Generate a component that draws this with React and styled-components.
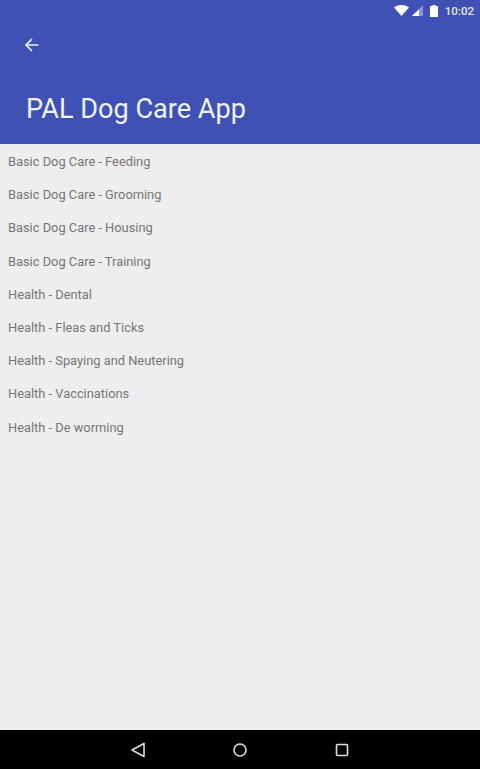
import React from "react";
import styled, { createGlobalStyle } from "styled-components";

const Global = createGlobalStyle`
  html, body { margin: 0; padding: 0; background: #eeeeee; }
  #root { height: 769px; }
`;

const Screen = styled.div`
  width: 480px;
  height: 769px;
  display: flex;
  flex-direction: column;
  overflow: hidden;
  background: #eeeeee;
  font-family: Roboto, "Liberation Sans", sans-serif;
`;

const AppBar = styled.header`
  height: 144px;
  flex: none;
  display: flex;
  flex-direction: column;
  background: #3f51b5;
  color: #fff;
`;

const StatusBar = styled.div`
  height: 21px;
  padding-right: 6px;
  display: flex;
  align-items: center;
  justify-content: flex-end;
  gap: 3px;
`;

const Clock = styled.span`
  margin-left: 4px;
  font-size: 11.5px;
  font-weight: 500;
  color: #e8eaf6;
`;

const BackButton = styled.div`
  height: 48px;
  padding-left: 24px;
  display: flex;
  align-items: center;
`;

const Title = styled.h1`
  margin: 20px 0 0 26px;
  font-size: 27.1px;
  line-height: 40px;
  font-weight: 400;
  color: #f1f3fb;
`;

const List = styled.ul`
  flex: 1;
  margin: 0;
  padding: 1px 0 0;
  list-style: none;
`;

const Item = styled.li`
  height: 33.2px;
  padding-left: 8px;
  display: flex;
  align-items: center;
  font-size: 12.85px;
  color: #757575;
`;

const NavBar = styled.nav`
  height: 39px;
  flex: none;
  display: flex;
  justify-content: center;
  align-items: center;
  gap: 86px;
  background: #000;
`;

const items = [
  "Basic Dog Care - Feeding",
  "Basic Dog Care - Grooming",
  "Basic Dog Care - Housing",
  "Basic Dog Care - Training",
  "Health - Dental",
  "Health - Fleas and Ticks",
  "Health - Spaying and Neutering",
  "Health - Vaccinations",
  "Health - De worming",
];

export default function App() {
  return (
    <Screen>
      <Global />
      <AppBar>
        <StatusBar>
          <svg width="15" height="11" viewBox="0 0 15 11"><path d="M0 2.5C4-.8 11-.8 15 2.5L7.5 11z" fill="#fff" /></svg>
          <svg width="11" height="11" viewBox="0 0 11 11"><path d="M11 0v11H0z" fill="#fff" opacity=".4" /><path d="M7 4.5V11H0z" fill="#fff" /></svg>
          <svg width="8" height="12" viewBox="0 0 8 12" style={{ marginLeft: 4 }}><path d="M2.5 0h3v1H8v11H0V1h2.5z" fill="#fff" /></svg>
          <Clock>10:02</Clock>
        </StatusBar>
        <BackButton>
          <svg width="16" height="16" viewBox="0 0 16 16" fill="none" stroke="#eef0fa" strokeWidth="1.7">
            <path d="M14.5 8H2M8 2 2 8l6 6" />
          </svg>
        </BackButton>
        <Title>PAL Dog Care App</Title>
      </AppBar>
      <List>
        {items.map((t) => <Item key={t}>{t}</Item>)}
      </List>
      <NavBar>
        <svg width="16" height="16" viewBox="0 0 16 16" fill="none" stroke="#ddd" strokeWidth="1.6"><path d="M14 1.5v13L2 8z" strokeLinejoin="round" /></svg>
        <svg width="16" height="16" viewBox="0 0 16 16" fill="none" stroke="#ddd" strokeWidth="1.6"><circle cx="8" cy="8" r="6" /></svg>
        <svg width="16" height="16" viewBox="0 0 16 16" fill="none" stroke="#ddd" strokeWidth="1.6"><rect x="2.5" y="2.5" width="11" height="11" rx="1" /></svg>
      </NavBar>
    </Screen>
  );
}
